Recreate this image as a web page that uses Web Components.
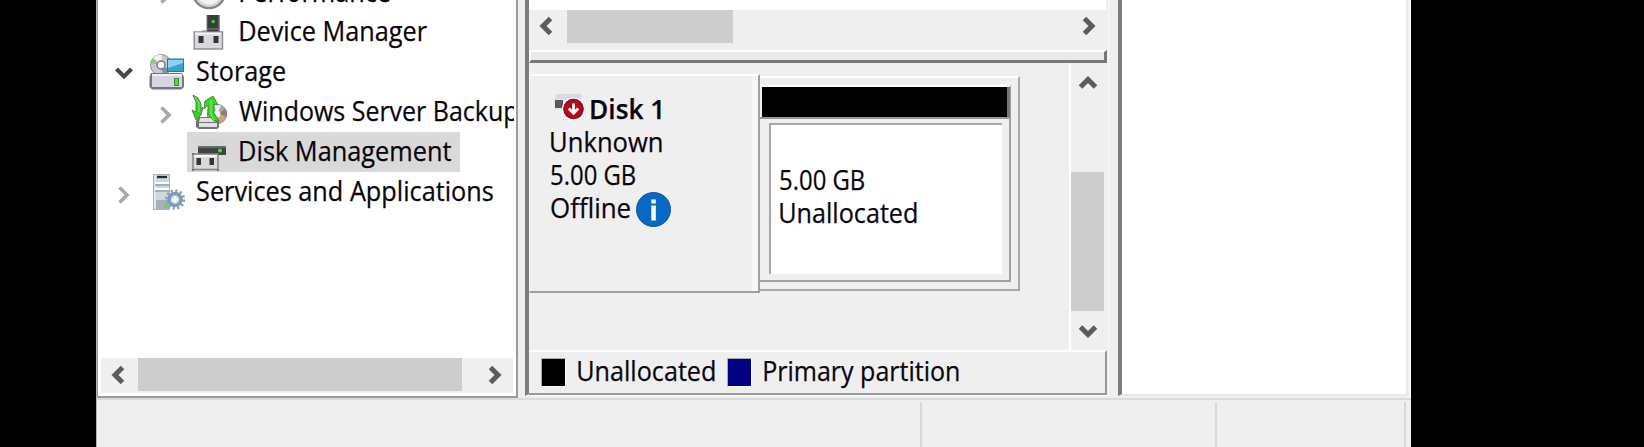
<!DOCTYPE html>
<html lang="en"><head><meta charset="utf-8"><title>Computer Management</title>
<style>html,body{margin:0;background:#000;overflow:hidden}body{width:1644px;height:447px}</style></head>
<body><management-window></management-window>
<script>
const make=(name,css,html,init)=>customElements.define(name,class extends HTMLElement{
  constructor(){super();const r=this.attachShadow({mode:'open'});r.innerHTML=`<style>*{box-sizing:border-box}:host{display:block;box-sizing:border-box}${css}</style>${typeof html==='function'?'':html}`;}
  connectedCallback(){if(typeof html==='function'&&!this.done){this.done=1;const t=document.createElement('template');t.innerHTML=html(this);this.shadowRoot.append(t.content.cloneNode(true));}if(init)init(this);}
});

/* A label whose glyph ink spans exactly the width given in w. */
make('fit-text',`:host{flex:none;height:33px;line-height:33px;font:27px/33px "Open Sans","Noto Sans",sans-serif;color:#08060c;-webkit-text-stroke:.25px #08060c;white-space:nowrap}span{display:inline-block;transform-origin:0 0}`,'<span><slot></slot></span>',el=>{
  const w=+el.getAttribute('w');el.style.width=w+'px';
  const c=document.createElement('canvas').getContext('2d');const bold=el.hasAttribute('bold');
  if(bold)el.style.fontWeight=600;
  c.font=(bold?'600 ':'')+'27px "Open Sans","Noto Sans",sans-serif';
  const m=c.measureText(el.textContent),ink=m.actualBoundingBoxLeft+m.actualBoundingBoxRight,s=w/ink;
  el.shadowRoot.querySelector('span').style.transform=`translateX(${m.actualBoundingBoxLeft*s}px) scaleX(${s})`;
});

const chev={left:'M14.500 2.500 7 10l7.500 7.500',right:'M5.500 2.500 13 10l-7.500 7.500',down:'M2.500 6 10 13.500l7.500-7.500',up:'M2.500 14 10 6.500l7.500 7.500'};
make('arrow-glyph',`:host{width:20px;height:20px;flex:none}svg{display:block}`,el=>{
  const d=el.getAttribute('dir');
  return `<svg width="20" height="20" fill="none" stroke="${el.getAttribute('color')||'#5c5c5c'}" stroke-width="${el.getAttribute('weight')||5}"><path d="${chev[d]}"/></svg>`});

const icons={
performance:`<circle cx="18" cy="18" r="16" fill="#f5f3f0" stroke="#858585" stroke-width="2.5"/><circle cx="18" cy="18" r="13.5" fill="none" stroke="#d9d5cf" stroke-width="2"/>`,
device:`<rect x="16" y="1" width="12.5" height="18" fill="#3b3b3b"/><path d="M28 1v18M16 1v16" stroke="#777"/><rect x="20.7" y="6" width="3" height="3" fill="#35d63a"/><path d="M11 17h4l2-2h10l3 3" fill="none" stroke="#888"/><rect x="3.2" y="18" width="28.3" height="17" fill="#d8d8dc" stroke="#8c8c90" stroke-width="1.4"/><path d="M4 19.5h26" stroke="#f4f4f4" stroke-width="2"/><path d="M7.5 22h5v7h-5zM22.5 22h5v7h-5z" fill="#343434"/>`,
storage:`<circle cx="13" cy="11" r="10.5" fill="#c9c9ce" stroke="#929297"/><path d="M13 11 5 4A10 10 0 0 1 14 1z" fill="#f3f3f3"/><path d="M13 11 2 9a10 10 0 0 1 3-5z" fill="#90c87d"/><path d="m13 11 2 10a10 10 0 0 0 7-5z" fill="#8e8e98"/><circle cx="13" cy="11" r="4" fill="#fff" stroke="#777889" stroke-width="1.5"/><rect x="19.5" y="5" width="16" height="12.5" fill="#38a4d3" stroke="#27779f"/><path d="M20 6h15v3L20 14z" fill="#8cd2ed"/><path d="M3 19h31l2 4v10l-3 2.500H4L1.500 33V23z" fill="#777486"/><path d="M4 22h30v11H4z" fill="#d7d5e2"/><path d="M4 20h30v2H4z" fill="#f0eff5"/><path d="M26 24h5v8h-5z" fill="#458942"/><path d="M27 25h3v6h-3z" fill="#65d51e"/>`,
backup:`<circle cx="26" cy="20" r="9.700" fill="#aaa8a8" stroke="#888"/><path d="m26 20-3-9h7z" fill="#eee"/><path d="m26 20 9-5 1 8z" fill="#8b7775"/><path d="m26 20 9 2-5 7z" fill="#e39b74"/><circle cx="26" cy="20" r="3.500" fill="#eee"/><path d="M8 23h18l2 4v6l-2 2H8l-3-2v-6z" fill="#6f7272"/><path d="M9 24h15v4H8zM8 29h18v4H8z" fill="#e0e1e2"/><path d="M2 1 7 4l3 6v5l2-2-2 8-5 5-4-10 4 2V8z" fill="#38cb2c" stroke="#538948"/><path d="M22 2l5 9-4-1v9l5 8h-5l-6-7v-9l-4 4 1-8z" fill="#36d728" stroke="#449336"/><path d="m4 3 4 6v9M20 6v15l3 5" stroke="#82f06c" fill="none"/>`,
disk:`<path d="M11 5h20l4 6H7z" fill="#d2d5d6"/><rect x="7" y="12" width="28" height="9" fill="#3f4341"/><path d="M7 12h28v2H7z" fill="#666a69"/><circle cx="29" cy="16.500" r="2" fill="#46de37"/><rect x="2" y="20" width="25" height="15.500" fill="#d9d9dd" stroke="#858589" stroke-width="1.500"/><path d="M3 22h23" stroke="#f6f6f6" stroke-width="2"/><path d="M5.500 24h4.500v7H5.500zM18.500 24H23v7h-4.500z" fill="#343434"/><path d="M1 20h2M1 36h2M26 36h2" stroke="#666" stroke-width="1.500"/>`,
services:`<path d="M5 0h17v36H5z" fill="#a5b2bc"/><path d="M6 1h15v25H6z" fill="#cbd9e0"/><path d="M6 1h2v34H6z" fill="#e1ebef"/><path d="M9 3h10" stroke="#263038" stroke-width="2.300"/><path d="M7 11h14M7 17h14" stroke="#758391" stroke-width="1.200"/><path d="M7 9h14M7 15h14" stroke="#fff" stroke-width="2"/><circle cx="27" cy="25.500" r="8.500" fill="none" stroke="#8ba6bd" stroke-width="3.500" stroke-dasharray="2.300 2.150"/><circle cx="27" cy="25.500" r="6" fill="#d5e3ec" stroke="#7d9bb4" stroke-width="3.500"/><path d="M24 25.500h6M27 22.500v6" stroke="#f9fdff" stroke-width="2"/><path d="M16 31h4v3h-4z" fill="#63d951"/>`};
make('tree-icon',`:host{width:37px;height:37px;flex:none}svg{display:block}`,el=>`<svg width="37" height="37">${icons[el.getAttribute('kind')]}</svg>`);

make('tree-row',`:host{height:40px;flex:none}.r{display:flex;height:40px;padding-left:var(--indent)}.a{width:20px;height:20px;flex:none;margin:var(--ay,11px) 0 0}.t{margin:var(--ty,1.500px) 0 0 var(--tg);height:33px}:host([selected]) .r{background:linear-gradient(#d9d9d9,#d9d9d9) 89px 0/273px 40px no-repeat}`,
 `<div class="r"><div class="a"><slot name="arrow"></slot></div><slot name="icon"></slot><div class="t"><slot></slot></div></div>`);
make('side-tree',`:host{width:421px;height:398px;background:#fff;border:solid #999ca5;border-width:0 2px 2px 1px;overflow:hidden;padding:0 3px 2px 3px;display:flex;flex-direction:column}
.tree{height:358px;margin-left:-3px;width:416px;overflow:hidden;flex:none;display:flex;flex-direction:column;justify-content:flex-end}
.tree::after{content:"";height:146px;flex:none}
.top{--indent:16px;--tg:12px}.top tree-icon{margin:2px 0 0 14px}.sub{--indent:58px;--tg:12px}.sub tree-icon{margin:2px 0 0 15px}`,
`<div class="tree">
<tree-row class="sub" style="--ay:13px;--ty:3px"><arrow-glyph slot="arrow" dir="right" color="#a8a8a8" weight="3.600"></arrow-glyph><tree-icon slot="icon" kind="performance"></tree-icon><fit-text w="150">Performance</fit-text></tree-row>
<tree-row class="sub"><tree-icon slot="icon" kind="device"></tree-icon><fit-text w="187">Device Manager</fit-text></tree-row>
<tree-row class="top"><arrow-glyph slot="arrow" dir="down" color="#464646" weight="4"></arrow-glyph><tree-icon slot="icon" kind="storage"></tree-icon><fit-text w="88">Storage</fit-text></tree-row>
<tree-row class="sub" style="--ay:13px;--tg:10.700px"><arrow-glyph slot="arrow" dir="right" color="#a8a8a8" weight="3.600"></arrow-glyph><tree-icon slot="icon" kind="backup"></tree-icon><fit-text w="279">Windows Server Backup</fit-text></tree-row>
<tree-row class="sub" selected><tree-icon slot="icon" kind="disk"></tree-icon><fit-text w="211">Disk Management</fit-text></tree-row>
<tree-row class="top" style="--ay:13px"><arrow-glyph slot="arrow" dir="right" color="#a8a8a8" weight="3.600"></arrow-glyph><tree-icon slot="icon" kind="services"></tree-icon><fit-text w="296">Services and Applications</fit-text></tree-row>
</div><scroll-bar style="height:35px;--lead:37px;--thumb:324px;--sy:7px"></scroll-bar>`);
make('scroll-bar',`:host{background:#efefef;flex:none}.b{display:flex;height:100%}.l{width:var(--lead);padding:var(--sy,6px) 0 0 7px;flex:none}.h{width:var(--thumb);height:33px;background:#cdcdcd;flex:none}.e{flex:1;display:flex;justify-content:flex-end;padding:var(--sy,6px) 8px 0 0}`,
`<div class="b"><div class="l"><arrow-glyph dir="left"></arrow-glyph></div><div class="h"></div><div class="e"><arrow-glyph dir="right"></arrow-glyph></div></div>`);
make('v-scroll',`:host{width:36px;height:287px;background:#efefef;border-left:2px solid #fff}.c{height:287px;display:flex;flex-direction:column;width:33px}.u{height:109px;padding:10px 0 0 7px}.h{height:139px;background:#cdcdcd}.d{padding:10px 0 0 7px}`,
`<div class="c"><div class="u"><arrow-glyph dir="up"></arrow-glyph></div><div class="h"></div><div class="d"><arrow-glyph dir="down"></arrow-glyph></div></div>`);

make('disk-card',`:host{width:231px;height:219px;margin-top:11px;border:solid;border-color:#fff #a0a0a0 #a0a0a0 #f8f8f8;border-width:2px 2px 2px 1px;flex:none}
.i{height:215px;border-right:6px solid #f8f8f8;padding:16px 0 0 21px}.i>div{display:flex;height:33px}.n svg{margin:-1px 7px 0 2px;flex:none}.o svg{margin:0 0 0 5px;flex:none}`,
`<div class="i"><div class="n"><svg width="31" height="33"><path d="M3 3h25v6H2z" fill="#d9d9e3"/><path d="M1 8h27v11H1z" fill="#e2e5e9"/><path d="M2 9h8v8H2z" fill="#55595a"/><circle cx="20.500" cy="18" r="11.500" fill="#fff"/><circle cx="20.500" cy="18" r="10.200" fill="#b70a20"/><circle cx="20.500" cy="18" r="9.400" fill="none" stroke="#8b1020" stroke-width="1.500"/><path d="M20.500 12.500v9M15.800 17.500l4.700 4.700 4.700-4.700" fill="none" stroke="#fff" stroke-width="2.800"/></svg><fit-text bold w="70">Disk 1</fit-text></div>
<div><fit-text w="111">Unknown</fit-text></div><div><fit-text w="84">5.00 GB</fit-text></div>
<div class="o"><fit-text w="79">Offline</fit-text><svg width="37" height="37"><circle cx="18.500" cy="18.500" r="17" fill="#066ac5" stroke="#185493"/><path d="M16.300 8.500h4.500v4h-4.500zM16.300 14.500h4.500v15h-4.500z" fill="#fff"/></svg></div></div>`);
make('partition-box',`:host{width:260px;height:215px;margin-top:13px;border:solid;border-color:#fff #a8a8a8 #a8a8a8 #fff;border-width:2px 2px 2px 0;flex:none;padding-top:7px}
.p{width:251px;height:197px;border-right:2px solid #a0a0a0;border-bottom:2px solid #a0a0a0;border-top:2px solid #fff;padding-left:2px}.k{height:30px;width:248px;background:#000;border-right:3px solid #777}.g{height:2px;background:#969696;margin-left:-2px}
.w{width:233px;height:151px;margin:4px 0 0 7px;background:#fff;border:solid #a8a8a8;border-width:2px 0 0 2px;padding:37.500px 0 0 9px}`,
`<div class="p"><div class="k"></div><div class="g"></div><div class="w"><fit-text w="84">5.00 GB</fit-text><fit-text w="137">Unallocated</fit-text></div></div>`);
make('legend-bar',`:host{height:45px;border:solid;border-color:#fff #999 #999 #fff;border-width:2px 2px 2px 0;width:578px}.l{display:flex;padding:2px 0 0 12px}i{display:block;width:25px;height:29px;margin-top:4px;border:solid;border-color:#aaa #fff #fff #aaa;border-width:1px}`,
`<div class="l"><i style="background:#000"></i><fit-text w="137" style="margin-left:12px">Unallocated</fit-text><i style="background:#000080;margin-left:12px"></i><fit-text w="195" style="margin-left:12px">Primary partition</fit-text></div>`);
make('disk-pane',`:host{width:584px;height:396px;margin-left:7px;border:solid;border-width:0 1px 2px 4px;border-color:#fafafa #fafafa #fafafa #7c7c7c;background:#efefef}
.head{height:10px;background:#fff;width:577px}.split{height:13px;width:578px;border:solid;border-color:#fff #777 #777 #fff;border-width:2px 3px 3px 2px;background:#e9e9e9}.m{display:flex;height:287px}.gap{flex:1}v-scroll{margin-right:3px}`,
`<div class="head"></div><scroll-bar style="height:40px;width:578px;--lead:38px;--thumb:166px"></scroll-bar><div class="split"></div><div class="m"><disk-card></disk-card><partition-box></partition-box><div class="gap"></div><v-scroll></v-scroll></div><legend-bar></legend-bar>`);
make('action-pane',`:host{width:290px;height:396px;margin-left:9px;background:#fff;border-left:4px solid #7c7c7c;border-right:2px solid #e8e8e8;border-bottom:2px solid #e8e8e8}`,'');
make('status-strip',`:host{height:49px;border-top:2px solid #dadada;background:#efefef;padding-top:2px}.s{display:flex;height:45px}.s div{border-right:2px solid #d7d7d7}`,
`<div class="s"><div style="width:825px"></div><div style="width:295px"></div><div style="width:189px"></div></div>`);
make('management-window',`:host{width:1315px;height:447px;margin-left:96px;background:#efefef;border-left:1px solid #b4b4b4;overflow:hidden}.b{display:flex;height:398px;border-right:2px solid #fafafa}side-tree{flex:none}disk-pane,action-pane{flex:none}`,
`<div class="b"><side-tree></side-tree><disk-pane></disk-pane><action-pane></action-pane></div><status-strip></status-strip>`);
</script></body></html>
